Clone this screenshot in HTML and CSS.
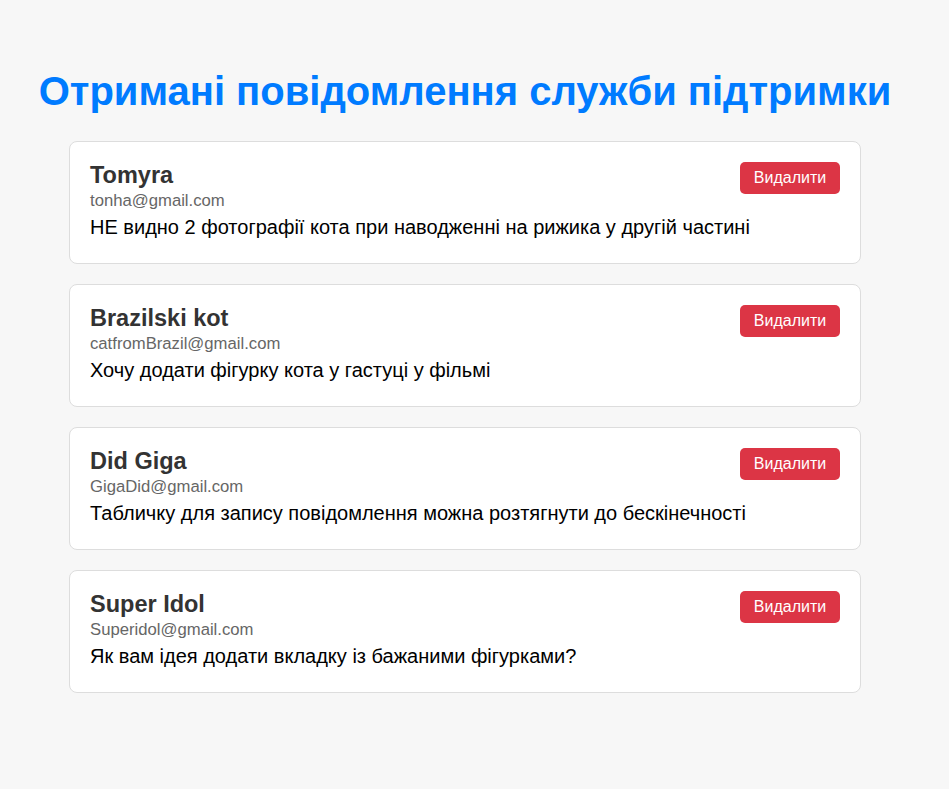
FILE: index.html
```html
<!DOCTYPE html>
<html lang="uk">
<head>
<meta charset="utf-8">
<title>Повідомлення</title>
<link rel="stylesheet" href="styles.css">
</head>
<body>
<main class="page">
  <h1 class="title">Отримані повідомлення служби підтримки</h1>
  <div class="list">
    <div class="card">
      <div class="card-head">
        <div class="sender">
          <h3 class="name">Tomyra</h3>
          <p class="email">tonha@gmail.com</p>
        </div>
        <button class="delete">Видалити</button>
      </div>
      <p class="message">НЕ видно 2 фотографії кота при наводженні на рижика у другій частині</p>
    </div>
    <div class="card">
      <div class="card-head">
        <div class="sender">
          <h3 class="name">Brazilski kot</h3>
          <p class="email">catfromBrazil@gmail.com</p>
        </div>
        <button class="delete">Видалити</button>
      </div>
      <p class="message">Хочу додати фігурку кота у гастуці у фільмі</p>
    </div>
    <div class="card">
      <div class="card-head">
        <div class="sender">
          <h3 class="name">Did Giga</h3>
          <p class="email">GigaDid@gmail.com</p>
        </div>
        <button class="delete">Видалити</button>
      </div>
      <p class="message">Табличку для запису повідомлення можна розтягнути до бескінечності</p>
    </div>
    <div class="card">
      <div class="card-head">
        <div class="sender">
          <h3 class="name">Super Idol</h3>
          <p class="email">Superidol@gmail.com</p>
        </div>
        <button class="delete">Видалити</button>
      </div>
      <p class="message">Як вам ідея додати вкладку із бажаними фігурками?</p>
    </div>
  </div>
</main>
</body>
</html>
```

FILE: styles.css
```css
html, body {
  margin: 0;
  padding: 0;
  background: #f7f7f7;
  font-family: "Liberation Sans", Arial, sans-serif;
}
.page {
  width: 930px;
  padding-top: 42px;
}
.title {
  margin: 27px 0;
  text-align: center;
  font-size: 40px;
  font-weight: bold;
  color: #007bff;
}
.list {
  width: 792px;
  margin: 0 auto;
  display: flex;
  flex-direction: column;
  gap: 20px;
}
.card {
  box-sizing: border-box;
  height: 123px;
  background: #fff;
  border: 1px solid #ddd;
  border-radius: 8px;
  padding: 20px;
}
.card-head {
  display: flex;
  justify-content: space-between;
  align-items: flex-start;
}
.sender {
  display: flex;
  flex-direction: column;
}
.name {
  margin: 0 0 2px;
  font-size: 23.5px;
  font-weight: bold;
  color: #333;
}
.email {
  margin: 0 0 4.5px;
  font-size: 16.7px;
  color: #666;
}
.message {
  margin: 0;
  font-size: 20px;
  color: #000;
}
.delete {
  width: 100px;
  height: 32px;
  border: none;
  border-radius: 5px;
  background: #dc3545;
  color: #fff;
  font-family: "Liberation Sans", Arial, sans-serif;
  font-size: 16px;
  padding: 0;
  cursor: pointer;
}
```
